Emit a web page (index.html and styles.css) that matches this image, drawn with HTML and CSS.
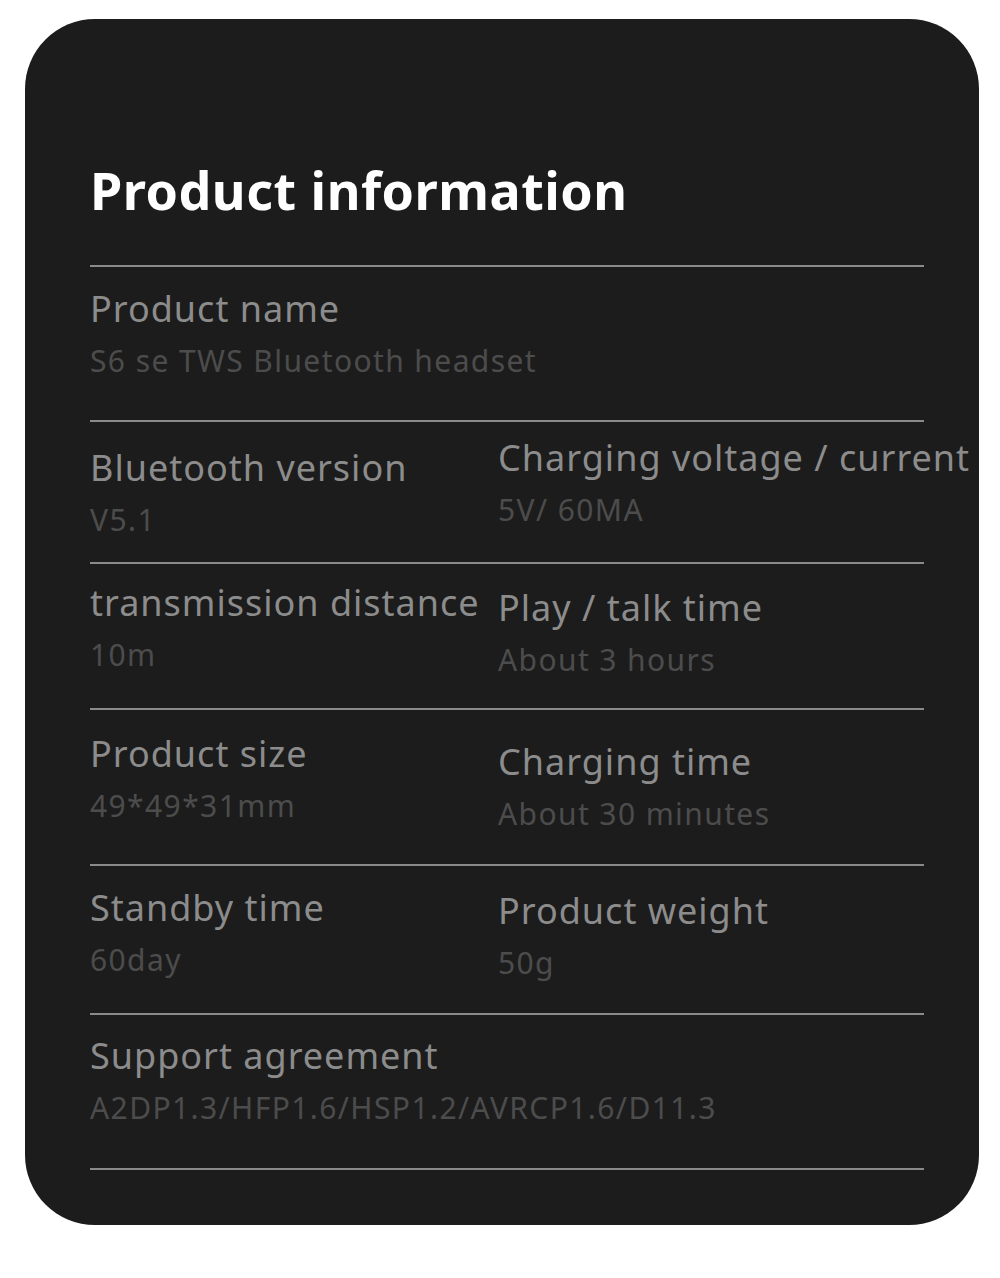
FILE: index.html
```html
<!DOCTYPE html>
<html lang="en">
<head>
<meta charset="utf-8">
<title>Product information</title>
<link rel="stylesheet" href="styles.css">
</head>
<body>
<section class="card">
  <h1 class="title">Product information</h1>
  <div class="specs">
    <div class="row row--h155">
      <div class="cell cell--pt17">
        <div class="label">Product name</div>
        <div class="value">S6 se TWS Bluetooth headset</div>
      </div>
    </div>
    <div class="row row--h142">
      <div class="cell cell--pt21">
        <div class="label">Bluetooth version</div>
        <div class="value">V5.1</div>
      </div>
      <div class="cell cell--pt11">
        <div class="label">Charging voltage / current</div>
        <div class="value">5V/ 60MA</div>
      </div>
    </div>
    <div class="row row--h146">
      <div class="cell cell--pt14">
        <div class="label">transmission distance</div>
        <div class="value">10m</div>
      </div>
      <div class="cell cell--pt19">
        <div class="label">Play / talk time</div>
        <div class="value">About 3 hours</div>
      </div>
    </div>
    <div class="row row--h156">
      <div class="cell cell--pt19">
        <div class="label">Product size</div>
        <div class="value">49*49*31mm</div>
      </div>
      <div class="cell cell--pt27">
        <div class="label">Charging time</div>
        <div class="value">About 30 minutes</div>
      </div>
    </div>
    <div class="row row--h149">
      <div class="cell cell--pt17">
        <div class="label">Standby time</div>
        <div class="value">60day</div>
      </div>
      <div class="cell cell--pt20">
        <div class="label">Product weight</div>
        <div class="value">50g</div>
      </div>
    </div>
    <div class="row row--h155">
      <div class="cell cell--pt16">
        <div class="label">Support agreement</div>
        <div class="value">A2DP1.3/HFP1.6/HSP1.2/AVRCP1.6/D11.3</div>
      </div>
    </div>
  </div>
</section>
</body>
</html>
```

FILE: styles.css
```css
html, body {
  margin: 0;
  padding: 0;
  background: #ffffff;
}

body {
  font-family: "Noto Sans", "Open Sans", sans-serif;
}

.card {
  box-sizing: border-box;
  width: 954px;
  height: 1206px;
  margin: 19px 0 0 25px;
  padding: 141px 55px 0 65px;
  background: #1c1c1c;
  border-radius: 70px;
}

.title {
  margin: 0 0 45px;
  font-size: 52px;
  line-height: 60px;
  font-weight: 700;
  letter-spacing: 0.5px;
  color: #ffffff;
  white-space: nowrap;
}

.specs {
  border-bottom: 2px solid #8a8a8a;
}

.row {
  box-sizing: border-box;
  display: grid;
  grid-template-columns: 408px 1fr;
  border-top: 2px solid #8a8a8a;
}

.row--h142 { height: 142px; }
.row--h146 { height: 146px; }
.row--h149 { height: 149px; }
.row--h155 { height: 155px; }
.row--h156 { height: 156px; }

.cell {
  white-space: nowrap;
}

.cell--pt11 { padding-top: 11px; }
.cell--pt14 { padding-top: 14px; }
.cell--pt16 { padding-top: 16px; }
.cell--pt17 { padding-top: 17px; }
.cell--pt19 { padding-top: 19px; }
.cell--pt20 { padding-top: 20px; }
.cell--pt21 { padding-top: 21px; }
.cell--pt27 { padding-top: 27px; }

.label {
  font-size: 36px;
  line-height: 50px;
  letter-spacing: 1px;
  color: #8c8c8c;
}

.value {
  font-size: 30px;
  line-height: 54px;
  letter-spacing: 1.4px;
  color: #4c4c4c;
}
```
